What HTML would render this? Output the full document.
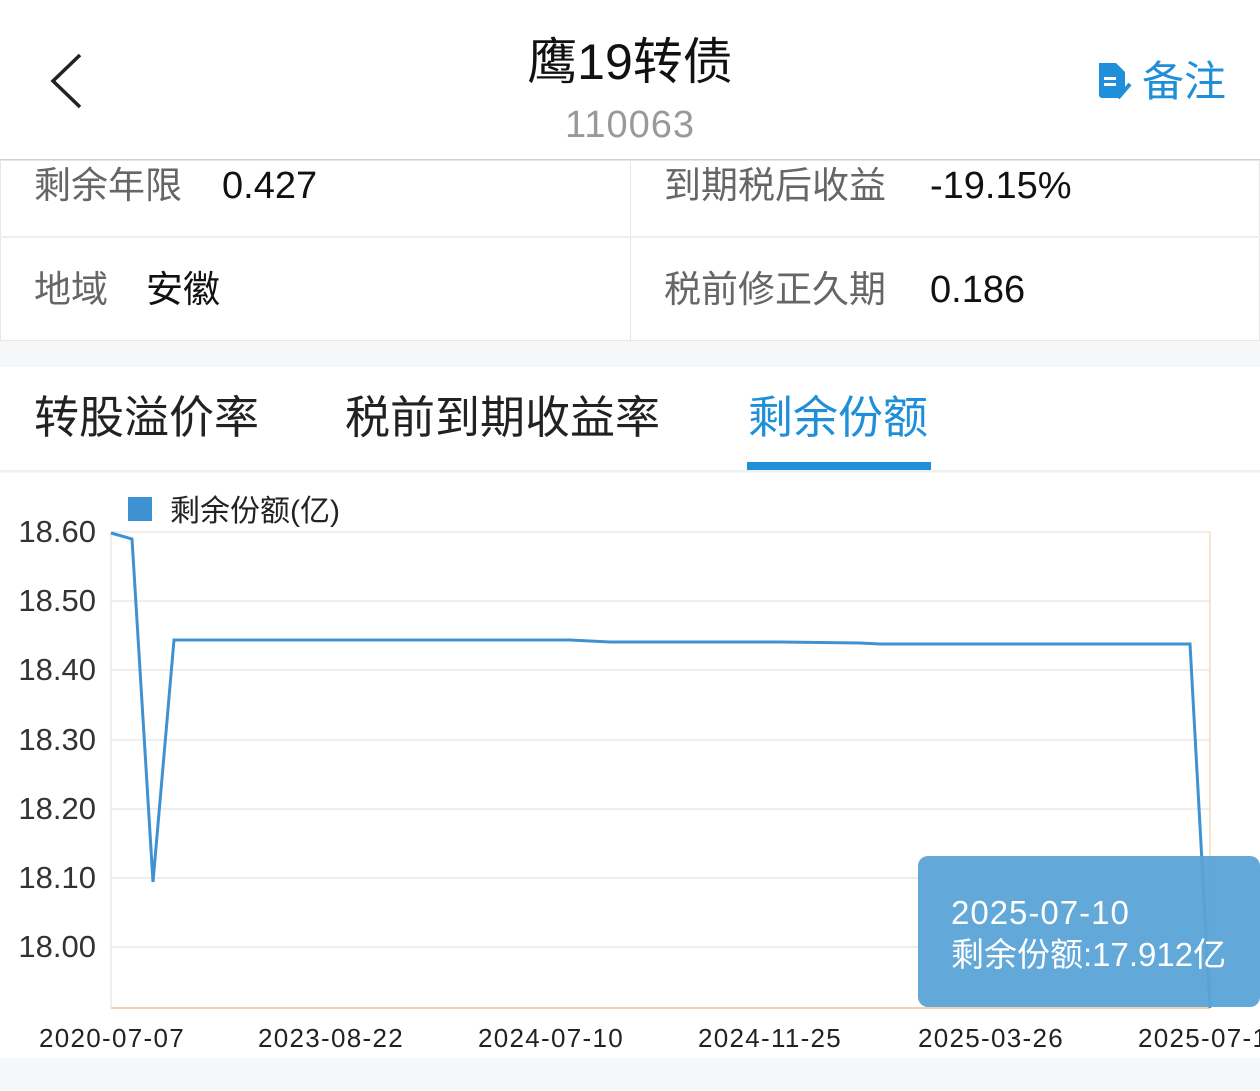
<!DOCTYPE html>
<html><head><meta charset="utf-8"><style>
*{margin:0;padding:0;box-sizing:border-box}
body{width:1260px;height:1091px;background:#f6f7f9;font-family:"Liberation Sans","Noto Sans CJK SC",sans-serif;position:relative;overflow:hidden}
.abs{position:absolute;white-space:nowrap}
</style></head><body>
<div class="abs" style="left:0;top:0;width:1260px;height:160px;background:#fff;border-bottom:1px solid #d0d0d0"></div>
<svg class="abs" style="left:44px;top:52px" width="44" height="58"><path d="M36 3 L9 29 L36 55" fill="none" stroke="#222" stroke-width="3.5"/></svg>
<div class="abs" style="left:0;width:1260px;top:30px;text-align:center;font-size:50px;color:#111;line-height:64px">鹰19转债</div>
<div class="abs" style="left:0;width:1260px;top:102px;text-align:center;font-size:38px;color:#999;line-height:46px;letter-spacing:1px">110063</div>
<svg class="abs" style="left:1096px;top:60px" width="40" height="42"><path d="M3 3 h17 l9 9 v18 l-6 8 h-17 a3 3 0 0 1 -3 -3z" fill="#1e8fd8"/><rect x="8" y="17" width="12" height="3" fill="#fff"/><rect x="8" y="23" width="12" height="3" fill="#fff"/><path d="M22 38 l12 -14" stroke="#1e8fd8" stroke-width="4"/></svg>
<div class="abs" style="left:1142px;top:56px;font-size:42px;color:#1e8fd8;line-height:52px">备注</div>

<div class="abs" style="left:0;top:160px;width:1260px;height:181px;background:#fff;border:1px solid #e6e6e6"></div>
<div class="abs" style="left:630px;top:160px;width:1px;height:181px;background:#e6e6e6"></div>
<div class="abs" style="left:0;top:236px;width:1260px;height:2px;background:#eee"></div>
<div class="abs" style="left:34px;top:164px;font-size:37px;color:#666;line-height:44px">剩余年限</div>
<div class="abs" style="left:222px;top:164px;font-size:38px;color:#111;line-height:44px">0.427</div>
<div class="abs" style="left:664px;top:164px;font-size:37px;color:#666;line-height:44px">到期税后收益</div>
<div class="abs" style="left:930px;top:164px;font-size:38px;color:#111;line-height:44px">-19.15%</div>
<div class="abs" style="left:34px;top:268px;font-size:37px;color:#666;line-height:44px">地域</div>
<div class="abs" style="left:146px;top:268px;font-size:37px;color:#111;line-height:44px">安徽</div>
<div class="abs" style="left:664px;top:268px;font-size:37px;color:#666;line-height:44px">税前修正久期</div>
<div class="abs" style="left:930px;top:268px;font-size:38px;color:#111;line-height:44px">0.186</div>

<div class="abs" style="left:0;top:367px;width:1260px;height:105px;background:#fff;border-bottom:2px solid #f0f0f0"></div>
<div class="abs" style="left:34px;top:390px;font-size:45px;color:#222;line-height:56px">转股溢价率</div>
<div class="abs" style="left:345px;top:390px;font-size:45px;color:#222;line-height:56px">税前到期收益率</div>
<div class="abs" style="left:748px;top:390px;font-size:45px;color:#1e8fd8;line-height:56px">剩余份额</div>
<div class="abs" style="left:747px;top:462px;width:184px;height:8px;background:#1e8fd8"></div>

<div class="abs" style="left:0;top:473px;width:1260px;height:585px;background:#fff"></div>
<svg class="abs" style="left:0;top:473px" width="1260" height="585">
<g transform="translate(0,-473)">
<rect x="128" y="497" width="24" height="24" fill="#3f92d2"/>
<text x="170" y="521" font-size="30" fill="#222" font-family="Liberation Sans,Noto Sans CJK SC,sans-serif">剩余份额(亿)</text>
<g stroke="#e8e8e8" stroke-width="1.5">
<line x1="111" y1="532" x2="1210" y2="532"/><line x1="111" y1="601" x2="1210" y2="601"/><line x1="111" y1="670" x2="1210" y2="670"/><line x1="111" y1="740" x2="1210" y2="740"/><line x1="111" y1="809" x2="1210" y2="809"/><line x1="111" y1="878" x2="1210" y2="878"/><line x1="111" y1="947" x2="1210" y2="947"/>
<line x1="111" y1="532" x2="111" y2="1008"/>
</g>
<line x1="1210" y1="532" x2="1210" y2="1008" stroke="#f5dcc0" stroke-width="1.5"/>
<line x1="111" y1="1008" x2="1210" y2="1008" stroke="#f5d0a8" stroke-width="2"/>
<g font-size="31" fill="#333" font-family="Liberation Sans,sans-serif" text-anchor="end">
<text x="96" y="542">18.60</text><text x="96" y="611">18.50</text><text x="96" y="680">18.40</text><text x="96" y="750">18.30</text><text x="96" y="819">18.20</text><text x="96" y="888">18.10</text><text x="96" y="957">18.00</text>
</g>
<polyline points="111,533 132,539 153,882 174,640 570,640 610,642 780,642 860,643 880,644 1190,644 1210,1008" fill="none" stroke="#3f92d2" stroke-width="3"/>
<rect x="918" y="856" width="342" height="151" rx="10" fill="#5aa3d6" opacity="0.95"/>
<text x="951" y="924" font-size="33" fill="#fff" font-family="Liberation Sans,sans-serif" letter-spacing="1">2025-07-10</text>
<text x="951" y="966" font-size="33" fill="#fff" font-family="Liberation Sans,Noto Sans CJK SC,sans-serif">剩余份额:17.912亿</text>
<g font-size="26" fill="#222" font-family="Liberation Sans,sans-serif" letter-spacing="1.3">
<text x="39" y="1047">2020-07-07</text><text x="258" y="1047">2023-08-22</text><text x="478" y="1047">2024-07-10</text><text x="698" y="1047">2024-11-25</text><text x="918" y="1047">2025-03-26</text><text x="1138" y="1047">2025-07-10</text>
</g>
</g></svg>
</body></html>
